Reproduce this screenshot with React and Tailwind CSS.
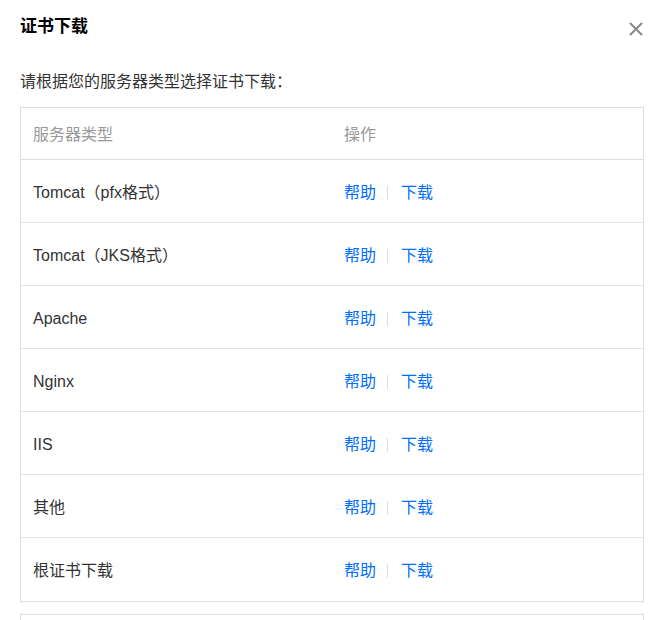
import React from "react";

const rows = ["Tomcat（pfx格式）", "Tomcat（JKS格式）", "Apache", "Nginx", "IIS", "其他", "根证书下载"];

const font = { fontFamily: '"Liberation Sans", Arial, "Noto Sans CJK SC", sans-serif' };

export default function App() {
  return (
    <div className="w-[662px] h-[620px] overflow-hidden bg-white text-[#333]" style={font}>
      {/* Header */}
      <div className="flex items-center justify-between pl-5 pr-[18px] pt-[13px] h-[41px]">
        <div className="text-[17px] font-bold text-black leading-6">证书下载</div>
        <svg width="16" height="16" viewBox="0 0 16 16" className="mt-[4px] text-[#888]">
          <path d="M2 2L14 14M14 2L2 14" stroke="currentColor" strokeWidth="2" fill="none" />
        </svg>
      </div>

      <div className="px-5 pt-[31px] text-[16px] leading-5">请根据您的服务器类型选择证书下载：</div>

      {/* Table */}
      <div className="mx-5 mt-[15px] w-[624px] border border-[#ddd]">
        <div className="flex items-center h-[52px] border-b border-[#ddd] text-[16px] text-[#999]">
          <div className="w-[323px] pl-3 pt-[3px]">服务器类型</div>
          <div className="flex-1 pt-[3px]">操作</div>
        </div>
        {rows.map((name, i) => (
          <div
            key={name}
            className={`flex items-center h-[63px] text-[16px] ${i < rows.length - 1 ? "border-b border-[#e5e5e5]" : ""}`}
          >
            <div className="w-[323px] pl-3 pt-[3px]">{name}</div>
            <div className="flex-1 flex items-center text-[#006eff] pt-[3px]">
              <span>帮助</span>
              <span className="ml-[11px] mr-[13px] w-px h-[14px] bg-[#ddd]" />
              <span>下载</span>
            </div>
          </div>
        ))}
      </div>

      <div className="mx-5 mt-[12px] w-[624px] h-[40px] border border-[#ddd]" />
    </div>
  );
}
